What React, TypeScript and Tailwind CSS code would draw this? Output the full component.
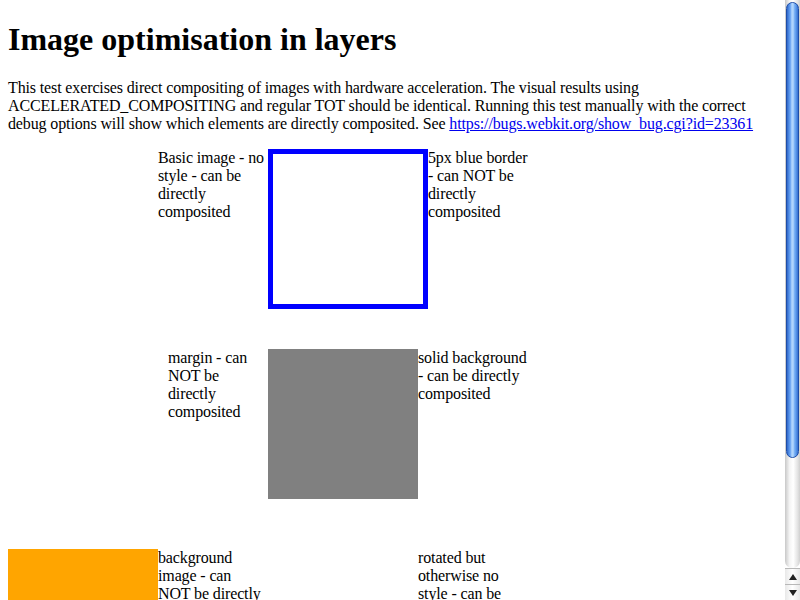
const serif = "font-['Liberation_Serif','Times_New_Roman',serif]";

function Caption({ children, width = 'w-[110px]' }: { children: React.ReactNode; width?: string }) {
  return <div className={`${width} shrink-0`}>{children}</div>;
}

function Scrollbar() {
  return (
    <aside className="flex h-[600px] w-[15px] shrink-0 flex-col bg-white">
      <div className="flex flex-1 flex-col rounded-b-[7px] bg-[linear-gradient(to_right,#c8c8c8,#f4f4f4_30%,#ffffff_55%,#e2e2e2_85%,#cfcfcf)] pb-[110px] pt-[2px]">
        <div className="mx-auto flex w-[13px] flex-1 justify-center rounded-[7px] border border-[#1e4ea8] bg-[linear-gradient(to_right,#2f66c8,#5f9cf0_25%,#a9d0fb_50%,#6aa6f2_75%,#3470d0)]">
          <div className="w-[3px] bg-[#bcdcff]/40" />
        </div>
      </div>
      <div className="flex h-[16px] items-center justify-center border-t border-[#b8b8b8] bg-[linear-gradient(to_right,#e8e8e8,#ffffff,#e8e8e8)]">
        <span className="h-0 w-0 border-x-[4px] border-b-[6px] border-x-transparent border-b-[#222]" />
      </div>
      <div className="flex h-[16px] items-center justify-center border-t border-[#b8b8b8] bg-[linear-gradient(to_right,#e8e8e8,#ffffff,#e8e8e8)]">
        <span className="h-0 w-0 border-x-[4px] border-t-[6px] border-x-transparent border-t-[#222]" />
      </div>
    </aside>
  );
}

export default function App() {
  return (
    <div className={`flex h-[600px] w-[800px] overflow-hidden bg-white text-black ${serif}`}>
      <main className="h-[600px] min-w-0 flex-1 overflow-hidden px-2 text-[16px] leading-[18px] tracking-[-0.13px]">
        <h1 className="mb-[21px] mt-[21px] text-[32px] font-bold leading-[37px] tracking-normal">
          Image optimisation in layers
        </h1>
        <p className="mb-4">
          This test exercises direct compositing of images with hardware acceleration. The visual results using
          ACCELERATED_COMPOSITING and regular TOT should be identical. Running this test manually with the correct
          debug options will show which elements are directly composited. See{' '}
          <a href="#" className="text-[#0000ee] underline">
            https://bugs.webkit.org/show_bug.cgi?id=23361
          </a>
        </p>

        <div className="flex h-[200px]">
          <div className="w-[150px] shrink-0" />
          <Caption>Basic image - no style - can be directly composited</Caption>
          <div className="h-[160px] w-[160px] shrink-0 border-[5px] border-[#0000ff]" />
          <Caption width="w-[106px]">5px blue border - can NOT be directly composited</Caption>
        </div>

        <div className="flex h-[200px]">
          <div className="w-[160px] shrink-0" />
          <Caption width="w-[100px]">margin - can NOT be directly composited</Caption>
          <div className="h-[150px] w-[150px] shrink-0 bg-[#808080]" />
          <Caption width="w-[112px]">solid background - can be directly composited</Caption>
        </div>

        <div className="flex h-[200px]">
          <div className="h-[150px] w-[150px] shrink-0 bg-[#ffa500]" />
          <Caption width="w-[106px]">background image - can NOT be directly composited</Caption>
          <div className="w-[154px] shrink-0" />
          <Caption width="w-[112px]">rotated but otherwise no style - can be directly composited</Caption>
        </div>
      </main>
      <Scrollbar />
    </div>
  );
}
